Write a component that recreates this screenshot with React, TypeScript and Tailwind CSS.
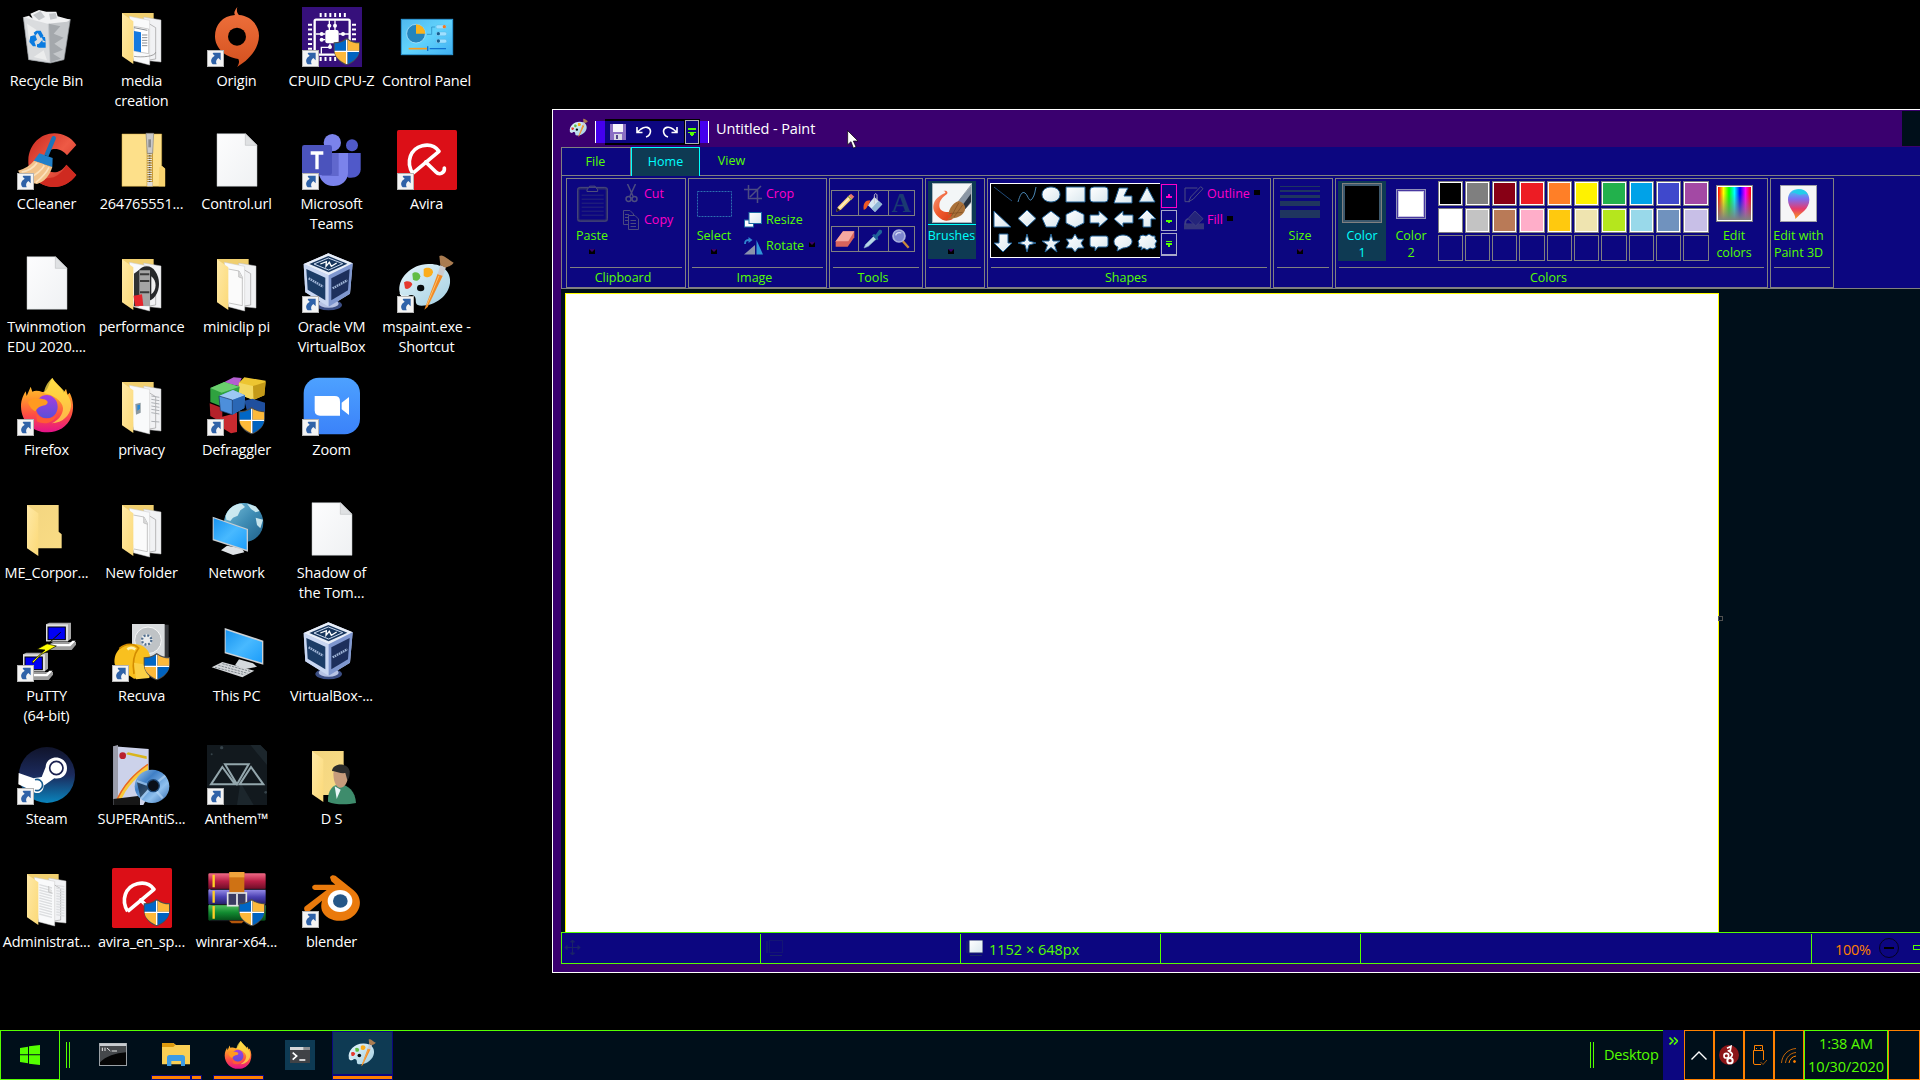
import React from "react";

/* ---------- desktop icons, drawn on a 180 x 180 grid ---------- */

const Shield = () => (
  <g>
    <path d="M134 93 C122 103 108 106 95 106 L95 128 C97 152 114 167 134 175 C154 167 172 152 174 128 L174 106 C160 106 147 103 134 93Z" fill="#4d4d4d" />
    <path d="M132 98 C121 106 110 109 98 109 L98 131 H132Z" fill="#0067c6" />
    <path d="M137 98 C147 106 159 109 171 109 L171 131 H137Z" fill="#fdb93a" />
    <path d="M98 135 H132 V171 C113 162 100 151 98 135Z" fill="#fdb93a" />
    <path d="M137 135 H171 C169 151 156 162 137 171Z" fill="#0063c0" />
    <path d="M134 98V171M98 133H171" stroke="#fff" strokeWidth="4" />
  </g>
);

const Shortcut = () => (
  <g>
    <rect x="1.500" y="130.500" width="48" height="48" fill="#f4f4f4" stroke="#b4b4b4" strokeWidth="3" />
    <path d="M19 137H41V160L34 153C28 158 25 163 29 172H17C9 162 12 153 23 146L17 140Z" fill="#2f62a8" />
  </g>
);

const FolderBack = () => <path d="M30 18H125V98L134 106V148H60L30 140Z" fill="url(#gFolderBack)" />;
const FolderFlap = () => <path d="M30 19L64 43V171L30 148Z" fill="url(#gFolder)" />;

const Papers = ({ children }: { children?: React.ReactNode }) => (
  <g>
    <path d="M30 18H125V60H60L30 140Z" fill="#f0cf70" />
    <path d="M95 30L147 39V165L100 160Z" fill="#f1f2f4" stroke="#bfbfbf" strokeWidth="1.500" />
    <path d="M98 42L131 62V156L104 160" fill="none" stroke="#9a9a9a" strokeWidth="2" />
    <path d="M52 28L113 40V174L64 161Z" fill="#f9fafb" stroke="#c9c9c9" strokeWidth="1.500" />
    {children}
    <FolderFlap />
  </g>
);

const Doc = () => (
  <g>
    <path d="M30 11H116L150 45V169H30Z" fill="url(#gDoc)" stroke="#b9bcbf" strokeWidth="1.500" />
    <path d="M115 11L150 46H115Z" fill="#dfe1e3" stroke="#b0b3b6" strokeWidth="1.500" />
  </g>
);

const VBox = () => (
  <g>
    <ellipse cx="80" cy="156" rx="40" ry="16" fill="#3b4e84" />
    <ellipse cx="80" cy="152" rx="30" ry="12" fill="#b7c3e4" />
    <path d="M79 1L152 31L144 122L80 161L10 118L5 33Z" fill="#b9c8ea" />
    <path d="M79 1L152 31L80 67L5 33Z" fill="#e8eef8" />
    <path d="M79 9L136 32L80 58L22 33Z" fill="#17365d" />
    <path d="M79 15L122 32L80 51L36 33Z" fill="none" stroke="#c9d8ee" strokeWidth="3" />
    <path d="M55 33L73 26L72 40L82 28L88 40L104 30" fill="none" stroke="#fff" strokeWidth="4" />
    <path d="M5 33L80 67V161L10 118Z" fill="#c9d7f2" />
    <path d="M13 48L70 74V142L17 110Z" fill="#1b3c66" />
    <path d="M80 67L152 31L144 122L80 161Z" fill="#7f97cf" />
    <path d="M88 76L143 48L138 112L88 142Z" fill="#1d2f5c" />
    <path d="M20 76L63 101" stroke="#9fb4d6" strokeWidth="7" strokeDasharray="5 2" />
    <path d="M92 106L136 82" stroke="#9fb4d6" strokeWidth="7" strokeDasharray="5 2" />
  </g>
);

const Palette = () => (
  <g>
    <path d="M8 118C0 78 42 33 94 33C138 31 163 58 159 90C155 128 116 158 74 158C54 158 57 148 56 138C55 126 42 122 32 130C20 138 10 132 8 118Z" fill="url(#gPalette)" />
    <path d="M9 122C14 130 24 132 34 128" stroke="#fff" strokeWidth="3" fill="none" />
    <ellipse cx="71" cy="105" rx="11" ry="10" fill="#06090c" />
    <path d="M21 88C28 82 44 84 46 94C42 104 32 112 24 106Z" fill="#e5392f" />
    <path d="M46 62C54 54 68 58 70 70C68 84 58 86 48 80Z" fill="#62bd45" />
    <path d="M80 48C90 40 108 44 108 58C104 74 90 76 80 68Z" fill="#fbad1c" />
    <path d="M82 170L122 62L138 67L92 162Z" fill="#f08a24" />
    <path d="M90 155L126 68" stroke="#ffc06b" strokeWidth="3" />
    <path d="M122 64L130 36L147 43L138 69Z" fill="#c9ccd1" />
    <path d="M127 9C138 2 150 18 170 29C162 40 152 40 146 44L130 36Z" fill="#a97b50" />
  </g>
);

const Firefox = () => (
  <g>
    <path d="M12 92C12 70 20 56 26 46L29 60L41 32L46 47C55 42 65 44 76 48C94 50 96 16 106 6C113 18 128 30 138 44L140 50L147 38L152 56L158 50C170 74 172 100 162 124C150 154 121 170 91 169C48 169 13 138 12 92Z" fill="url(#gFx)" />
    <path d="M106 6C90 20 80 40 82 52C106 56 136 74 138 96C138 118 122 134 104 142C138 140 158 118 162 92C164 72 152 56 142 46C130 30 112 22 106 6Z" fill="#ffe14a" opacity=".75" />
    <ellipse cx="89" cy="92" rx="33" ry="35" fill="url(#gFxIn)" />
    <path d="M33 78C46 64 62 66 80 70C92 72 98 82 84 88C70 90 62 94 56 106C48 104 36 92 33 78Z" fill="#ff9a1f" />
    <path d="M56 106C60 130 100 136 122 114C112 138 86 150 60 136Z" fill="#ff5a36" />
  </g>
);

const Umbrella = () => (
  <g>
    <rect width="180" height="180" rx="5" fill="#dc0f17" />
    <path d="M47 130C26 96 40 56 76 47C98 42 116 50 126 64L47 130" fill="none" stroke="#fff" strokeWidth="11" strokeLinejoin="round" />
    <path d="M86 96L116 125C128 138 144 128 142 114" fill="none" stroke="#fff" strokeWidth="11" strokeLinecap="round" />
  </g>
);

const PuttyPc = () => (
  <g>
    <path d="M87 7L97 2H162V50L152 58H87Z" fill="#a8a8a8" />
    <rect x="87" y="7" width="66" height="51" fill="#e0e0e0" />
    <rect x="93" y="15" width="52" height="38" fill="#0000f4" stroke="#000" strokeWidth="3" />
    <path d="M108 60H177V68L164 84H90V72Z" fill="#9c9c9c" />
    <path d="M86 73H160L176 56H166L156 66H92Z" fill="#fff" />
  </g>
);

const art: Record<string, React.ReactNode> = {
  bin: (
    <g>
      <path d="M19 31L160 37L141 158L100 168L35 158Z" fill="#c5c8cb" />
      <path d="M19 31L92 42L98 168L35 158Z" fill="#dadcde" />
      <path d="M19 31L36 26L50 40L40 20L66 9L88 14L118 14L122 28L160 38L150 44L92 50Z" fill="#f1f2f3" />
      <path d="M48 24L70 12L84 30L66 40ZM96 20L116 18L120 34L100 38Z" fill="#c4c7ca" />
      <path d="M96 50L130 58L110 80L140 92L112 110L138 128L108 140L132 155L100 166Z" fill="#a4a8ac" />
      <path d="M30 50L60 70L36 100ZM50 150L80 130L90 160Z" fill="#eceded" />
      <path d="M19 31L35 158L100 168L141 158L160 37" fill="none" stroke="#8c9196" strokeWidth="2" />
      <path d="M50 77L58 71H71L80 88L71 93L62 78L55 86ZM40 88L55 84L60 98L52 104L57 118H48L37 105ZM66 110L76 99L77 106H86V122H66L60 120V112ZM74 90L84 90L86 104L78 100Z" fill="#0a7be0" />
    </g>
  ),
  media: (
    <Papers>
      <path d="M66 58L110 66V140L66 132Z" fill="#fff" stroke="#999" strokeWidth="1.500" />
      <path d="M66 72L87 76V136L66 131Z" fill="#1479e0" />
      <path d="M66 62L106 70M90 84H106M90 92H106M90 100H106M90 108H106M90 116H106" stroke="#8b8f94" strokeWidth="3" />
      <path d="M66 148C90 152 130 148 131 136" fill="none" stroke="#777" strokeWidth="2" />
    </Papers>
  ),
  origin: (
    <g>
      <path d="M91 0C82 12 80 18 84 24C46 26 24 54 24 88C24 120 50 150 94 156C98 164 96 172 90 180C126 160 156 124 156 86C156 54 130 26 96 24C90 18 88 10 91 0Z" fill="url(#gOrigin)" />
      <circle cx="90" cy="89" r="27" fill="#000" />
    </g>
  ),
  cpuz: (
    <g>
      <rect width="180" height="180" fill="#36107b" />
      <rect x="38" y="38" width="105" height="105" rx="4" fill="none" stroke="#fff" strokeWidth="7" />
      <path d="M53 24H132M53 156H132" stroke="#fff" strokeWidth="12" strokeDasharray="6 8.500" />
      <path d="M24 50V132M156 50V132" stroke="#fff" strokeWidth="12" strokeDasharray="6 8.500" />
      <rect x="70" y="69" width="40" height="40" rx="6" fill="#fff" />
      <path d="M82 70V40M99 70V40M70 81H42M70 98H60M110 81H142M84 110V121H58V140" stroke="#fff" strokeWidth="4" fill="none" />
      {[[82, 56], [99, 56], [59, 81], [59, 98], [123, 81], [84, 120]].map(([x, y]) => (
        <circle key={`${x}-${y}`} cx={x} cy={y} r="6" fill="#fff" />
      ))}
    </g>
  ),
  panel: (
    <g>
      <rect x="13" y="37" width="154" height="106" fill="url(#gPanel)" stroke="#2f9bd8" strokeWidth="3" />
      <circle cx="57" cy="80" r="28" fill="#2585bd" stroke="#bfeaff" strokeWidth="2" />
      <path d="M57 80V52A28 28 0 0 1 85 80Z" fill="#fbb31c" />
      <path d="M90 82H104V60H114" stroke="#2384bd" strokeWidth="2" fill="none" />
      <rect x="117" y="54" width="32" height="11" rx="5" fill="#9fe0ff" stroke="#4ba9db" />
      <rect x="117" y="75" width="32" height="11" rx="5" fill="#9fe0ff" stroke="#4ba9db" />
      <rect x="117" y="97" width="32" height="11" rx="5" fill="#9fe0ff" stroke="#4ba9db" />
      <circle cx="142" cy="59" r="5" fill="#f47b20" />
      <circle cx="124" cy="80" r="5" fill="#175d8f" />
      <circle cx="124" cy="102" r="5" fill="#175d8f" />
      <path d="M35 125H90" stroke="#fb9d1c" strokeWidth="5" />
      <path d="M98 125H147M92 118V132" stroke="#0f72cf" strokeWidth="4" />
    </g>
  ),
  ccleaner: (
    <g>
      <path d="M178 45L150 76C140 62 122 54 106 58C82 64 72 92 84 112C98 134 130 132 148 104L178 135C158 162 130 174 100 170C60 164 32 134 34 90C36 44 70 10 112 10C138 10 162 22 178 45Z" fill="url(#gRed)" />
      <path d="M148 104L178 135C158 162 130 174 100 170C84 168 70 162 58 150L110 142C126 134 140 122 148 104Z" fill="#cf2a20" />
      <path d="M104 22C108 14 120 18 116 28L94 80L82 74Z" fill="#1b74bb" />
      <path d="M67 70L107 84L106 112L50 92Z" fill="#2180c9" />
      <path d="M3 122C24 116 40 106 51 92L106 111C96 140 82 156 60 162C36 156 14 140 3 122Z" fill="#f2c38b" />
      <path d="M14 126C36 122 52 110 60 98M34 146C60 132 76 118 82 106M56 158C78 140 90 124 96 112" stroke="#fbe2bd" strokeWidth="5" fill="none" />
    </g>
  ),
  zip: (
    <g>
      <path d="M30 12H149V108L159 116V169H30Z" fill="#fde08a" stroke="#d7ae45" strokeWidth="1.500" />
      <path d="M142 112L150 108L159 116V169H140Z" fill="#f8d36f" />
      <rect x="104" y="12" width="19" height="157" fill="#c79c3c" />
      <path d="M113 66V169" stroke="#e8e8e8" strokeWidth="14" strokeDasharray="3 4" />
      <path d="M113 69V169" stroke="#54504a" strokeWidth="5" strokeDasharray="3 4" />
      <path d="M102 10H125L122 70H106Z" fill="#c9c9c9" stroke="#858585" strokeWidth="2" />
      <path d="M109 28H117V52H109Z" fill="#8b8b8b" />
      <rect x="106" y="156" width="16" height="13" fill="#ddd" />
    </g>
  ),
  doc: <Doc />,
  teams: (
    <g>
      <circle cx="91" cy="38" r="26" fill="#7b83eb" />
      <circle cx="150" cy="46" r="18" fill="#5059c9" />
      <path d="M110 69H176V118C176 136 160 146 140 143L118 130Z" fill="#5059c9" />
      <path d="M50 69H138V128C138 152 118 168 94 168C68 168 54 150 50 130Z" fill="#7b83eb" />
      <path d="M90 69H110V138H60L54 128H90Z" fill="#4a50b5" opacity=".55" />
      <rect y="45" width="90" height="90" rx="7" fill="#4b53bc" />
      <path d="M26 69H64M45 68V118" stroke="#fff" strokeWidth="10" />
    </g>
  ),
  avira: <Umbrella />,
  performance: (
    <Papers>
      <ellipse cx="104" cy="92" rx="37" ry="52" fill="#26282a" />
      <path d="M118 70V124C134 112 136 84 118 70Z" fill="#f0f0f0" />
      <path d="M82 52H114V160L66 158V62Z" fill="#a5a5a5" />
      <path d="M66 62L82 50V160H66Z" fill="#303234" />
      <path d="M84 64H112M84 84H112M84 118H112" stroke="#3b3b3b" strokeWidth="6" />
      <path d="M64 128L90 124L94 158L70 160Z" fill="#e5252c" />
    </Papers>
  ),
  papers: (
    <Papers>
      <path d="M64 48L96 54L106 72V158L66 150" fill="#fbfbfb" stroke="#a9a9a9" strokeWidth="2" />
      <path d="M95 54V72L107 76" fill="#d9d9d9" stroke="#b7b7b7" strokeWidth="2" />
    </Papers>
  ),
  admin: (
    <Papers>
      {[58, 66, 74, 82, 90, 98, 106, 114, 122, 130, 138, 146].map((y) => (
        <path key={y} d={`M67 ${y - 8}L105 ${y + 2}M118 ${y - 6}L142 ${y - 2}`} stroke="#dcdee0" strokeWidth="4" />
      ))}
      <path d="M95 54V72L107 76" fill="#e3e3e3" stroke="#b7b7b7" strokeWidth="2" />
    </Papers>
  ),
  privacy: (
    <Papers>
      <path d="M70 84L86 80V110L72 116Z" fill="#8d989f" />
      <path d="M76 88L84 86V98L76 104Z" fill="#2688d8" />
      <path d="M118 60L142 64M118 70L142 74M118 80L142 84M118 90L142 94M118 100L142 104M118 110L142 114M118 136L142 138" stroke="#aeb1b5" strokeWidth="3" />
    </Papers>
  ),
  folder: (
    <g>
      <FolderBack />
      <FolderFlap />
    </g>
  ),
  vbox: <VBox />,
  palette: <Palette />,
  firefox: <Firefox />,
  defrag: (
    <g>
      <path d="M48 20L80 4L104 6L94 30Z" fill="#b45fd0" />
      <path d="M96 20L112 4L176 14L172 58L140 72L92 54Z" fill="#edc531" />
      <path d="M96 20L138 30L140 72L92 54Z" fill="#f3d860" />
      <path d="M138 30L176 18L172 58L140 72Z" fill="#c49a18" />
      <path d="M10 36L52 18L98 32L94 60L50 94L10 78Z" fill="#2fa23f" />
      <path d="M10 36L52 18L98 32L44 50Z" fill="#6bcf6e" />
      <path d="M8 82L46 96V140L10 120Z" fill="#b5222a" />
      <path d="M40 124L90 110V168L72 172L36 150Z" fill="#c92a30" />
      <path d="M112 74L136 68L174 80V110L120 104Z" fill="#1f4f9e" />
      <path d="M36 60L78 42L114 58L112 96L76 116L40 104Z" fill="#4d8fdb" />
      <path d="M36 60L78 42L114 58L76 72Z" fill="#9cc8f3" />
      <path d="M76 72L114 58L112 96L76 116Z" fill="#2a67b5" />
      <path d="M36 60L76 72V116L40 104Z" fill="none" stroke="#16325d" strokeWidth="2" />
    </g>
  ),
  zoom: (
    <g>
      <rect x="5" y="5" width="169" height="170" rx="46" fill="url(#gZoom)" />
      <path d="M38 60H98Q114 60 114 76V119H54Q38 119 38 103Z" fill="#fff" />
      <path d="M119 80L141 63V117L119 100Z" fill="#fff" />
    </g>
  ),
  network: (
    <g>
      <circle cx="110" cy="71" r="59" fill="url(#gGlobe)" />
      <path d="M56 50C66 24 86 14 104 14L114 24L100 34L92 50L78 56L70 66L58 62ZM120 14L146 22L158 36L146 40L132 30ZM146 56L168 62L160 88L150 78Z" fill="#d6f0f4" opacity=".9" />
      <path d="M60 140L104 148L112 160L78 168L42 154Z" fill="#dfe3e6" />
      <path d="M17 53L123 90V158L17 124Z" fill="#c8cdd1" />
      <path d="M20 58L119 92V152L20 120Z" fill="url(#gScreen)" />
    </g>
  ),
  putty: (
    <g>
      <PuttyPc />
      <g transform="translate(-69 90)">
        <PuttyPc />
      </g>
      <path d="M131 31L92 66L118 72L72 98L48 124L46 118L84 84L60 82L100 60Z" fill="#ff0" stroke="#000" strokeWidth="2" />
    </g>
  ),
  recuva: (
    <g>
      <path d="M60 8L170 8L170 110L60 90Z" fill="#35373a" />
      <path d="M60 6H158V104H60Z" fill="#d9dcde" />
      <circle cx="108" cy="55" r="40" fill="#bfc3c6" stroke="#f7f7f7" strokeWidth="3" />
      <circle cx="104" cy="54" r="18" fill="#e9ebec" />
      <circle cx="104" cy="54" r="14" fill="none" stroke="#526f8f" strokeWidth="7" strokeDasharray="6 5" />
      <path d="M8 126C4 90 28 66 62 66C96 66 116 84 116 118L112 166L66 170C40 152 20 148 8 126Z" fill="#f9c01f" />
      <path d="M22 80C42 62 66 64 80 78C66 96 60 120 66 156" fill="none" stroke="#d38c00" strokeWidth="5" />
      <path d="M46 82C54 76 64 78 70 82" stroke="#fff2b0" strokeWidth="8" fill="none" />
      <path d="M66 122L112 130V168L72 172Z" fill="#fbd045" />
    </g>
  ),
  thispc: (
    <g>
      <path d="M96 112L138 124L150 134L112 142L84 130Z" fill="#d4d9dd" />
      <path d="M53 18L169 56V128L53 94Z" fill="#ccd1d5" />
      <path d="M56 24L165 60V122L56 90Z" fill="url(#gScreen)" />
      <path d="M14 136L46 120L142 146L106 166Z" fill="#d3d6d9" />
      <path d="M24 136L112 158M34 130L122 154M46 125L132 149" stroke="#7e868c" strokeWidth="3" strokeDasharray="7 3" />
    </g>
  ),
  steam: (
    <g>
      <circle cx="90" cy="90" r="84" fill="url(#gSteam)" />
      <path d="M5 84L50 100C62 96 68 98 74 96L86 66C88 26 150 28 150 70C150 94 130 104 112 100L80 122C80 144 58 150 46 138L4 118Z" fill="#fff" />
      <circle cx="118" cy="69" r="20" fill="none" stroke="#1b2150" strokeWidth="5" />
      <path d="M54 104A17 17 0 1 1 54 136" fill="none" stroke="#155a8d" strokeWidth="5" />
    </g>
  ),
  superanti: (
    <g>
      <path d="M4 4L110 12V150L94 180H4Z" fill="#ccd2ea" />
      <path d="M4 4L18 0V160L4 180Z" fill="#9b9dab" />
      <path d="M42 28L104 42V34L48 22Z" fill="#d9b51d" />
      <circle cx="32" cy="32" r="10" fill="#b9202d" />
      <path d="M108 56C76 76 36 110 6 178H22C44 120 80 92 108 76Z" fill="#f7c93a" />
      <path d="M108 58C72 84 34 116 10 176" stroke="#e8622a" strokeWidth="4" fill="none" />
      <path d="M4 162L84 152V180H4Z" fill="#161616" />
      <ellipse cx="120" cy="124" rx="52" ry="50" fill="url(#gDisc)" />
      <path d="M74 108L120 124L86 162M120 124L160 92M120 124L152 160" stroke="#c7e2fb" strokeWidth="7" opacity=".5" />
      <circle cx="124" cy="122" r="18" fill="#0a0f18" stroke="#1e4775" strokeWidth="4" />
    </g>
  ),
  anthem: (
    <g>
      <path d="M0 0H160L180 20V180H0Z" fill="#12191e" />
      <path d="M100 112L140 180H90ZM130 0H160L180 20V60Z" fill="#1c262c" />
      <path d="M46 66L12 118H84ZM132 66L98 118H169ZM54 58H125L90 118Z" fill="none" stroke="#93a6ac" strokeWidth="6" />
      <circle cx="44" cy="8" r="5" fill="#36434a" />
      <circle cx="176" cy="142" r="4" fill="#36434a" />
      <circle cx="14" cy="28" r="3" fill="#36434a" />
    </g>
  ),
  user: (
    <g>
      <path d="M30 18H125V150H60L30 140Z" fill="url(#gFolderBack)" />
      <FolderFlap />
      <path d="M78 170C76 134 94 120 112 118C140 120 160 140 162 174C134 180 100 180 78 170Z" fill="#3e8c6c" />
      <path d="M98 124L116 134L104 162Z" fill="#eaf5f8" />
      <path d="M94 84C98 70 132 70 138 90C138 112 128 130 112 128C100 126 94 104 94 84Z" fill="#c79c7c" />
      <path d="M90 78C92 54 136 50 143 78C144 94 140 104 136 106L130 84C116 86 104 80 90 78Z" fill="#2c2c2c" />
    </g>
  ),
  winrar: (
    <g>
      <rect x="4" y="16" width="172" height="48" rx="4" fill="url(#gBookR)" />
      <rect x="4" y="64" width="172" height="46" rx="4" fill="url(#gBookB)" />
      <rect x="4" y="110" width="172" height="48" rx="4" fill="url(#gBookG)" />
      <path d="M20 20V58M20 68V104M20 114V152" stroke="#ffcf26" strokeWidth="7" />
      <path d="M10 64H176M10 110H176M10 158H120" stroke="#15151d" strokeWidth="3" />
      <rect x="67" y="12" width="45" height="64" fill="#cf7214" />
      <path d="M67 12H112V28H67Z" fill="#f0a43c" />
      <rect x="62" y="75" width="56" height="38" fill="#3b3b62" stroke="#e3e3e3" strokeWidth="5" />
      <path d="M90 78V112" stroke="#eee" strokeWidth="5" />
      <path d="M66 158H112L104 166H74Z" fill="#b4560a" />
    </g>
  ),
  blender: (
    <g>
      <path d="M84 28C90 18 100 22 106 28L154 66C186 92 176 132 146 150C114 168 72 156 60 128C56 116 58 106 60 98L24 128C14 136 2 128 8 116L74 66H38C28 64 28 52 38 50H100L88 40Z" fill="#ea7a0c" />
      <ellipse cx="114" cy="99" rx="37" ry="33" fill="#fff" />
      <ellipse cx="115" cy="99" rx="22" ry="20" fill="#265787" />
    </g>
  ),
};

type Item = { a: string; t: string[]; s?: boolean; u?: boolean };

const columns: Item[][] = [
  [
    { a: "bin", t: ["Recycle Bin"] },
    { a: "ccleaner", t: ["CCleaner"], s: true },
    { a: "doc", t: ["Twinmotion", "EDU 2020...."] },
    { a: "firefox", t: ["Firefox"], s: true },
    { a: "folder", t: ["ME_Corpor..."] },
    { a: "putty", t: ["PuTTY", "(64-bit)"], s: true },
    { a: "steam", t: ["Steam"], s: true },
    { a: "admin", t: ["Administrat..."] },
  ],
  [
    { a: "media", t: ["media", "creation"] },
    { a: "zip", t: ["264765551..."] },
    { a: "performance", t: ["performance"] },
    { a: "privacy", t: ["privacy"] },
    { a: "papers", t: ["New folder"] },
    { a: "recuva", t: ["Recuva"], s: true, u: true },
    { a: "superanti", t: ["SUPERAntiS..."] },
    { a: "avira", t: ["avira_en_sp..."], u: true },
  ],
  [
    { a: "origin", t: ["Origin"], s: true },
    { a: "doc", t: ["Control.url"] },
    { a: "papers", t: ["miniclip pi"] },
    { a: "defrag", t: ["Defraggler"], s: true, u: true },
    { a: "network", t: ["Network"] },
    { a: "thispc", t: ["This PC"] },
    { a: "anthem", t: ["Anthem™"], s: true },
    { a: "winrar", t: ["winrar-x64..."], u: true },
  ],
  [
    { a: "cpuz", t: ["CPUID CPU-Z"], s: true, u: true },
    { a: "teams", t: ["Microsoft", "Teams"], s: true },
    { a: "vbox", t: ["Oracle VM", "VirtualBox"], s: true },
    { a: "zoom", t: ["Zoom"], s: true },
    { a: "doc", t: ["Shadow of", "the Tom..."] },
    { a: "vbox", t: ["VirtualBox-..."] },
    { a: "user", t: ["D S"] },
    { a: "blender", t: ["blender"], s: true },
  ],
  [
    { a: "panel", t: ["Control Panel"] },
    { a: "avira", t: ["Avira"], s: true },
    { a: "palette", t: ["mspaint.exe -", "Shortcut"], s: true },
  ],
];

const Grad = ({ id, stops, v }: { id: string; stops: string[]; v?: boolean }) => (
  <linearGradient id={id} x1="0" y1="0" x2={v ? "0" : "1"} y2="1">
    {stops.map((c, i) => (
      <stop key={i} offset={i / (stops.length - 1)} stopColor={c} />
    ))}
  </linearGradient>
);

const Gradients = () => (
  <svg width="0" height="0" className="absolute">
    <defs>
      <Grad id="gFolder" stops={["#ffe9a6", "#fbd978"]} />
      <Grad id="gFolderBack" stops={["#f3d580", "#f9dc85"]} />
      <Grad id="gDoc" stops={["#fdfdfe", "#eff1f3"]} />
      <Grad id="gPalette" stops={["#e6f5fb", "#a3cfe2"]} />
      <Grad id="gFx" v stops={["#ffd43b", "#ff9f2a", "#ff4f42", "#e4118a"]} />
      <Grad id="gFxIn" v stops={["#a53de0", "#5a4fd8"]} />
      <Grad id="gOrigin" v stops={["#f0723e", "#d4511f"]} />
      <Grad id="gPanel" stops={["#4fb8ee", "#62d3fc", "#3fb0f2"]} />
      <Grad id="gRed" stops={["#c8281f", "#ee5a45", "#c8281f"]} />
      <Grad id="gZoom" v stops={["#4da1ff", "#3b82f9"]} />
      <Grad id="gGlobe" stops={["#7cc2dd", "#3f8db5", "#1e5f88"]} />
      <Grad id="gScreen" stops={["#1793f0", "#48b9ff", "#1c9dfa"]} />
      <Grad id="gSteam" v stops={["#10142b", "#1b2a5c", "#0a85bd"]} />
      <Grad id="gDisc" stops={["#a9cdf0", "#3f7fc6", "#8fc0ee", "#2e66ab"]} />
      <Grad id="gBookR" v stops={["#f06a86", "#b61e45", "#6b0d26"]} />
      <Grad id="gBookB" v stops={["#9a90ea", "#4a40b2", "#231d66"]} />
      <Grad id="gBookG" v stops={["#53c260", "#118a30", "#064a18"]} />
      <Grad id="gShape" stops={["#ffffff", "#d9e7ee"]} />
      <Grad id="gDrop" v stops={["#35d6f2", "#7d6cf0", "#e83a6a", "#f6a21c"]} />
      <Grad id="gSwirl" stops={["#f7a184", "#f0592b", "#d8401a"]} />
    </defs>
  </svg>
);

const DesktopItem = ({ item }: { item: Item }) => (
  <div className="flex h-[123px] w-[95px] flex-col items-center pt-[7px]">
    <svg viewBox="0 0 180 180" className="mr-px h-[60px] w-[60px] shrink-0">
      {art[item.a]}
      {item.u && <Shield />}
      {item.s && <Shortcut />}
    </svg>
    <div className="mr-[2px] mt-[4px] flex flex-col items-center text-[14.5px] leading-[20px] tracking-[-0.2px] text-white">
      {item.t.map((l) => (
        <span key={l} className="whitespace-nowrap">
          {l}
        </span>
      ))}
    </div>
  </div>
);

/* ---------- ribbon ---------- */

const Group = ({ w, label, children }: { w: string; label?: string; children: React.ReactNode }) => (
  <div className={`flex h-[110px] shrink-0 flex-col border border-[#808080] ${w}`}>
    <div className="flex h-[88px] items-start">{children}</div>
    <div className="mx-[3px] h-px shrink-0 bg-[#808080]" />
    <div className="flex h-[19px] items-center justify-center pr-[6px]">{label}</div>
  </div>
);

const Down = () => (
  <svg viewBox="0 0 6 5" className="h-[5px] w-[6px]">
    <rect width="6" height="5" fill="#000" />
    <path d="M0 0H6L3 3Z" fill="#3a006f" />
  </svg>
);

const BigButton = ({ icon, label, arrow, className }: { icon: React.ReactNode; label: string[]; arrow?: boolean; className: string }) => (
  <div className={`flex shrink-0 flex-col items-center ${className}`}>
    <div className="flex h-[47px] w-full items-center justify-center">{icon}</div>
    {label.map((l) => (
      <span key={l} className="h-[17px] whitespace-nowrap leading-[17px]">
        {l}
      </span>
    ))}
    {arrow && (
      <div className="mt-[5px]">
        <Down />
      </div>
    )}
  </div>
);

const Row = ({ icon, label, off, arrow }: { icon: React.ReactNode; label: string; off?: boolean; arrow?: React.ReactNode }) => (
  <div className={`flex h-[26px] items-center ${off ? "text-[#ff00c8]" : ""}`}>
    <div className="flex w-[20px] justify-center">{icon}</div>
    <span className="mb-[2px] ml-[3px] whitespace-nowrap">{label}</span>
    {arrow}
  </div>
);

const BlackBox = () => <div className="mb-[3px] ml-[4px] h-[5px] w-[6px] bg-black" />;

const PasteIcon = () => (
  <svg viewBox="0 0 93 110" className="h-[37px] w-[31px]">
    <rect x="3" y="9" width="87" height="98" rx="6" fill="none" stroke="#2c2c6c" strokeWidth="8" />
    <path d="M30 14L38 3H54L62 14V19H30Z" fill="#0c0680" stroke="#50507a" strokeWidth="3" />
    <path d="M14 30H80M14 42H80M14 54H80M14 66H80M14 78H80M14 90H80" stroke="#282878" strokeWidth="3" />
    <rect x="1.500" y="7" width="90" height="101" rx="8" fill="none" stroke="#44447a" strokeWidth="3" />
  </svg>
);
const CutIcon = () => (
  <svg viewBox="0 0 12 20" className="h-[20px] w-[13px]" fill="none" stroke="#4c4c80" strokeWidth="1.500">
    <path d="M2 0L7.500 12M10 0L4.500 12" />
    <circle cx="3" cy="15" r="2.500" />
    <circle cx="9" cy="15" r="2.500" />
  </svg>
);
const CopyIcon = () => (
  <svg viewBox="0 0 16 20" className="h-[20px] w-[16px]" fill="#0c0680" stroke="#4a4a80">
    <path d="M.5.5H7L10.500 4V14.500H.5ZM2 4.500H6M2 7.500H8M2 10.500H8" />
    <path d="M5.500 5.500H12L15.500 9V19.500H5.500ZM7.500 10.500H13M7.500 13.500H13M7.500 16.500H13" />
  </svg>
);
const SelectIcon = () => (
  <svg viewBox="0 0 35 26" className="h-[26px] w-[35px]">
    <rect x=".5" y=".5" width="34" height="25" fill="none" stroke="#2d6fb0" strokeDasharray="2 1" />
  </svg>
);
const CropIcon = () => (
  <svg viewBox="0 0 18 18" className="h-[18px] w-[18px]" fill="none" stroke="#4c4c82" strokeWidth="1.500">
    <path d="M4.500 0V13.500H18M0 4.500H13.500V18M6 12L17 1" />
  </svg>
);
const ResizeIcon = () => (
  <svg viewBox="0 0 18 16" className="h-[16px] w-[18px]">
    <rect x=".5" y="8" width="9" height="7" fill="#fff" stroke="#1d6aa5" />
    <rect x="5" y=".5" width="12.500" height="11" fill="url(#gShape)" stroke="#1d6aa5" />
  </svg>
);
const RotateIcon = () => (
  <svg viewBox="0 0 19 18" className="h-[18px] w-[19px]">
    <path d="M0 17.500H11V8Z" fill="#8a94ac" />
    <path d="M12.500 17.500V3L19 17.500Z" fill="#2f96d8" />
    <path d="M1 7C1 3 3 3 5 3" fill="none" stroke="#2f86d0" strokeWidth="1.800" />
    <path d="M4.500 0L8.500 3L4.500 6Z" fill="#2f86d0" />
  </svg>
);
const PencilIcon = () => (
  <svg viewBox="0 0 60 60" className="h-[20px] w-[20px]">
    <path d="M3 57L8 42L44 5L54 14L18 50Z" fill="#f6cf7c" />
    <path d="M12 47L48 9" stroke="#fff0c4" strokeWidth="5" />
    <path d="M3 57L7 44L16 52Z" fill="#2a211b" />
    <path d="M42 8L48 2L58 11L51 18Z" fill="#e57a6c" />
    <path d="M39 10L50 20" stroke="#8ca43c" strokeWidth="4" />
  </svg>
);
const BucketIcon = ({ dim }: { dim?: boolean }) => (
  <svg viewBox="0 0 60 60" className="h-[20px] w-[20px]">
    {dim ? (
      <g>
        <rect y="40" width="60" height="18" fill="#35357c" />
        <path d="M33 3L57 26L35 48L12 26Z" fill="#24247a" stroke="#3f3f84" strokeWidth="3" />
        <path d="M12 26C4 30 3 38 5 44" stroke="#3f3f84" strokeWidth="5" fill="none" />
      </g>
    ) : (
      <g>
        <path d="M34 12L58 34L36 57L14 36Z" fill="#d5e6f3" />
        <path d="M36 57L58 34L46 24L26 46Z" fill="#8fb6d6" />
        <path d="M22 22C6 22 0 32 2 50C12 50 12 38 18 34Z" fill="#ee5a24" />
        <path d="M34 32V8C34 0 43 0 42 10V24" fill="none" stroke="#c9c9cf" strokeWidth="3" />
      </g>
    )}
  </svg>
);
const EraserIcon = () => (
  <svg viewBox="0 0 60 54" className="h-[18px] w-[20px]">
    <path d="M2 34L24 4L58 4V22L38 50H2Z" fill="#d9645c" />
    <path d="M2 34L24 4L58 4L40 34Z" fill="#f6a9a0" />
  </svg>
);
const PickerIcon = () => (
  <svg viewBox="0 0 60 60" className="h-[20px] w-[20px]">
    <path d="M3 57L8 46L32 22L40 30L16 52Z" fill="#b8d6e8" stroke="#7fa6c4" strokeWidth="2" />
    <path d="M27 19L33 15L38 17L48 3C55 0 60 6 56 13L44 24L46 31L42 34Z" fill="#1f6399" />
  </svg>
);
const LensIcon = () => (
  <svg viewBox="0 0 54 60" className="h-[20px] w-[18px]">
    <path d="M32 36L50 56" stroke="#c98b3c" strokeWidth="7" />
    <circle cx="21" cy="21" r="18" fill="#7d86cf" stroke="#a9b1dd" strokeWidth="5" />
    <path d="M11 19C13 12 20 9 28 12" stroke="#d4daf6" strokeWidth="4" fill="none" />
  </svg>
);
const BrushIcon = () => (
  <svg viewBox="0 0 120 120" className="h-[40px] w-[40px]">
    <rect x="1.500" y="1.500" width="117" height="117" fill="#f3f6f7" stroke="#a9b4bc" strokeWidth="3" />
    <path d="M117 8L78 56L100 78L117 60Z" fill="#8a96a4" />
    <path d="M117 32L92 66L100 78L117 56Z" fill="#27323f" />
    <path d="M117 6L80 54" stroke="#6f7b88" strokeWidth="2" />
    <path d="M34 24C44 20 50 28 44 34C30 44 22 54 22 68C22 84 40 90 58 86L62 108C50 114 36 116 24 106C6 92 0 76 6 60C12 44 30 34 40 30C40 26 38 25 34 24Z" fill="url(#gSwirl)" />
    <path d="M48 110C46 84 60 60 80 54C96 58 106 74 96 88C86 104 66 106 48 110Z" fill="#a9713a" />
    <path d="M30 110C46 112 60 106 60 88C50 94 44 102 30 110Z" fill="#e04a20" />
    <path d="M58 100L80 60M66 102L92 66M52 92L92 88" stroke="#7d4c20" strokeWidth="2" />
  </svg>
);

const shapePaths = [
  "M1 2L19 16",
  "M1 17C3 10 5 6 8 8S12 18 15 14S18 6 19 2",
  "M10 2C15 2 19 5 19 9.500S15 17 10 17S1 14 1 9.500S5 2 10 2Z",
  "M1 2H20V17H1Z",
  "M5 2H16Q19 2 19 5V14Q19 17 16 17H4Q1 17 1 14V5Q1 2 5 2Z",
  "M6 3H15L11 11H19V18H1Z",
  "M10 2L18 17H2Z",
  "M1 2L18 18H1Z",
  "M10 1L19 9.500L10 18L1 9.500Z",
  "M10 2L19 9L15 18H5L1 9Z",
  "M10 1L19 5.500V14L10 18.500L1 14V5.500Z",
  "M1 6H10V2L19 10L10 18V14H1Z",
  "M20 6H10V2L1 10L10 18V14H20Z",
  "M10 1L19 10H14V18H6V10H1Z",
  "M6 1H15V10H19L10 19L1 10H6Z",
  "M10 1L12 8L19 10L12 12L10 19L8 12L1 10L8 8Z",
  "M10 1L12 8H19L13.500 12L16 19L10 14.500L4 19L6.500 12L1 8H8Z",
  "M10 1L13 6H19L16 10L19 15H13L10 19L7 15H1L4 10L1 6H7Z",
  "M3 3H17Q19 3 19 5V12Q19 14 17 14H9L6 18V14H3Q1 14 1 12V5Q1 3 3 3Z",
  "M10 2C15 2 19 5 19 8.500S15 15 10 15L4 18L5 14C2 13 1 11 1 8.500C1 5 5 2 10 2Z",
  "M3 3L6 2L9 3L12 1L15 3L18 3L18 6L20 8L18 11L19 14L16 16L13 15L10 17L7 15L4 17L5 14L1 14L2 11L1 8L3 6Z",
];

const Gallery = () => (
  <div className="ml-[2px] mt-[4px] h-[75px] w-[170px] border-y border-l border-white bg-black pl-[2px]">
    {[0, 1, 2].map((r) => (
      <div key={r} className="flex h-[24px] items-center gap-[4px] pb-[2px]">
        {shapePaths.slice(r * 7, r * 7 + 7).map((d, i) => (
          <svg key={i} viewBox="0 0 20 20" className="h-[20px] w-[20px] shrink-0 overflow-visible">
            <path d={d} fill={r === 0 && i < 2 ? "none" : "url(#gShape)"} stroke={r === 0 && i < 2 ? (i ? "#4a86b4" : "#1f4a78") : "#1f5f94"} />
          </svg>
        ))}
      </div>
    ))}
  </div>
);

const Spin = ({ d, className }: { d: string; className: string }) => (
  <div className={`flex w-[16px] items-center justify-center border ${className}`}>
    <svg viewBox="0 0 6 6" className="h-[6px] w-[6px]" fill="currentColor" shapeRendering="crispEdges">
      <path d={d} />
    </svg>
  </div>
);

const ToolRow = ({ icons }: { icons: React.ReactNode[] }) => (
  <div className="flex h-[26px] w-[84px] divide-x divide-[#808080] border border-[#808080]">
    <div className="flex w-[28px] items-center justify-center">{icons[0]}</div>
    <div className="flex w-[30px] items-center justify-center">{icons[1]}</div>
    <div className="flex w-[26px] items-center justify-center">{icons[2]}</div>
  </div>
);

const swatches = [
  "bg-black", "bg-[#7f7f7f]", "bg-[#880015]", "bg-[#ed1c24]", "bg-[#ff7f27]", "bg-[#fff200]", "bg-[#22b14c]", "bg-[#00a2e8]", "bg-[#3f48cc]", "bg-[#a349a4]",
  "bg-white", "bg-[#c3c3c3]", "bg-[#b97a57]", "bg-[#ffaec9]", "bg-[#ffc90e]", "bg-[#efe4b0]", "bg-[#b5e61d]", "bg-[#99d9ea]", "bg-[#7092be]", "bg-[#c8bfe7]",
];

const Swatches = () => (
  <div className="ml-[4px] mt-[2px] grid shrink-0 grid-cols-[25px_25px_25px_26px_25px_25px_26px_25px_25px_26px] grid-rows-[25px_25px_26px] gap-[2px]">
    {swatches.map((c) => (
      <div key={c} className="border border-[#808080] bg-white p-px">
        <div className={`h-full w-full ${c}`} />
      </div>
    ))}
    {Array.from({ length: 10 }, (_, i) => (
      <div key={i} className="border border-[#808080]" />
    ))}
  </div>
);

const Ribbon = () => (
  <div className="flex h-[113px] gap-[2px] border-b border-l border-[#808080] pl-[4px] pt-[2px] text-[12.5px] leading-[17px] text-[#55ff00]">
    <Group w="w-[120px]" label="Clipboard">
      <BigButton className="w-[50px] pt-[1px]" icon={<PasteIcon />} label={["Paste"]} arrow />
      <div className="ml-[4px] mt-[2px]">
        <Row icon={<CutIcon />} label="Cut" off />
        <Row icon={<CopyIcon />} label="Copy" off />
      </div>
    </Group>
    <Group w="w-[139px]" label="Image">
      <BigButton className="w-[50px] pt-[1px]" icon={<SelectIcon />} label={["Select"]} arrow />
      <div className="ml-[4px] mt-[2px]">
        <Row icon={<CropIcon />} label="Crop" off />
        <Row icon={<ResizeIcon />} label="Resize" />
        <Row icon={<RotateIcon />} label="Rotate" arrow={<div className="mb-[3px] ml-[5px]"><Down /></div>} />
      </div>
    </Group>
    <Group w="w-[94px]" label="Tools">
      <div className="ml-[1px] mt-[11px] flex flex-col gap-[10px]">
        <ToolRow
          icons={[
            <PencilIcon />,
            <BucketIcon />,
            <span className="font-['Liberation_Serif'] text-[27px] font-bold leading-none text-[#1b3a72]">A</span>,
          ]}
        />
        <ToolRow icons={[<EraserIcon />, <PickerIcon />, <LensIcon />]} />
      </div>
    </Group>
    <Group w="w-[60px]">
      <div className="ml-[2px] mt-[2px] flex h-[78px] w-[48px] flex-col items-center bg-[#0e3a53] pt-[2px] text-[#00ffff]">
        <BrushIcon />
        <div className="mt-px h-px w-full shrink-0 bg-[#00ffff]" />
        <span className="mr-px mt-[2px] leading-[17px]">Brushes</span>
        <div className="mr-[2px] mt-[5px]">
          <Down />
        </div>
      </div>
    </Group>
    <Group w="w-[284px]" label="Shapes">
      <Gallery />
      <div className="ml-px mt-[5px] flex flex-col gap-[2px]">
        <Spin className="h-[24px] border-[#ff00c8] text-[#ff00c8]" d="M2 1H4V3H6V5H0V3H2Z" />
        <Spin className="h-[21px] border-[#a9a9c9] text-[#55ff00]" d="M0 2H6V4H4V5H2V4H0Z" />
        <Spin className="h-[23px] border-b-2 border-[#a9a9c9] text-[#55ff00]" d="M0 0H6V1H0ZM0 2H6V4H4V6H2V4H0Z" />
      </div>
      <div className="ml-[7px] mt-[2px]">
        <Row
          off
          label="Outline"
          arrow={<BlackBox />}
          icon={
            <svg viewBox="0 0 60 54" className="h-[18px] w-[20px]" fill="none" stroke="#4a4a82" strokeWidth="3">
              <path d="M40 9H3V50H18M14 50L20 36L50 5L57 11L28 42Z" />
            </svg>
          }
        />
        <Row off label="Fill" arrow={<BlackBox />} icon={<BucketIcon dim />} />
      </div>
    </Group>
    <Group w="w-[60px]">
      <BigButton
        className="ml-[1px] w-[50px] pt-[1px]"
        arrow
        label={["Size"]}
        icon={
          <div className="flex h-[36px] w-[40px] flex-col">
            <div className="h-px bg-[#1f355f]" />
            <div className="mt-[3px] h-[2px] bg-[#1f355f]" />
            <div className="mt-[3px] h-[3px] bg-[#1f355f]" />
            <div className="mt-[3px] h-[5px] bg-[#1f355f]" />
            <div className="mt-[4px] h-[8px] bg-[#1f355f]" />
          </div>
        }
      />
    </Group>
    <Group w="w-[433px]" label="Colors">
      <BigButton
        className="ml-[2px] mt-[2px] h-[80px] w-[48px] bg-[#0e3a53] text-[#00ffff]"
        label={["Color", "1"]}
        icon={<div className="mb-[3px] h-[40px] w-[40px] border border-[#808080] bg-[#3c586c] p-[2px]"><div className="h-full w-full bg-black" /></div>}
      />
      <BigButton
        className="ml-[2px] mt-px w-[46px]"
        label={["Color", "2"]}
        icon={<div className="h-[30px] w-[30px] border border-[#9090b8] bg-[#4838a0] p-px"><div className="h-full w-full border border-[#c8c4e4] bg-white" /></div>}
      />
      <Swatches />
      <BigButton
        className="ml-[2px] mt-px w-[46px]"
        label={["Edit", "colors"]}
        icon={
          <div className="mb-px h-[37px] w-[37px] border border-[#808080] bg-white p-px">
            <div className="h-full w-full bg-[linear-gradient(to_right,#f00,#ff0,#0f0,#0ff,#00f,#f0f,#f00)]">
              <div className="h-full w-full bg-[linear-gradient(to_bottom,transparent_20%,#808080)]" />
            </div>
          </div>
        }
      />
    </Group>
    <Group w="w-[64px]">
      <BigButton
        className="mt-px w-[55px]"
        label={["Edit with", "Paint 3D"]}
        icon={
          <svg viewBox="0 0 111 111" className="mb-px h-[37px] w-[37px]">
            <rect x="1.500" y="1.500" width="108" height="108" fill="#f6f6f7" stroke="#a0a0a8" strokeWidth="3" />
            <path d="M46 102C48 84 24 70 24 44C24 24 38 12 56 12C76 12 88 26 88 44C88 72 62 84 46 102Z" fill="url(#gDrop)" />
            <path d="M34 26C44 10 74 8 84 30C74 22 64 34 50 26C44 22 38 22 34 26Z" fill="#22cdea" />
          </svg>
        }
      />
    </Group>
  </div>
);

/* ---------- window ---------- */

const TitleBar = () => (
  <div className="flex h-[37px] shrink-0 items-start text-white">
    <svg viewBox="0 0 180 180" className="ml-[16px] mt-[8px] h-[20px] w-[20px]">
      <Palette />
    </svg>
    <div className="ml-[6px] mt-[11px] flex h-[22px] border-x border-white bg-[#4400ee] px-[9px]">
      <div className="-my-[2px] flex h-[26px] items-center border-y-2 border-black bg-[#0c0680]">
        <svg viewBox="0 0 16 16" className="ml-[5px] h-[16px] w-[16px]">
          <rect width="16" height="16" fill="#8a6fc4" />
          <rect x="3" width="10" height="8" fill="#f4f4fb" />
          <rect x="4" y="10" width="8" height="6" fill="#d9d9e6" />
          <rect x="6" y="11" width="2" height="4" fill="#54468c" />
        </svg>
        <svg viewBox="0 0 16 12" className="ml-[10px] h-[12px] w-[16px]" fill="none" stroke="#fff" strokeWidth="1.600">
          <path d="M1 1V6.500H6.500M1.500 6L5 3C9 0 14 1 14.500 5C14.500 8 13 10 10 11" />
        </svg>
        <svg viewBox="0 0 16 12" className="ml-[10px] h-[12px] w-[16px]" fill="none" stroke="#fff" strokeWidth="1.600">
          <path d="M15 1V6.500H9.500M14.500 6L11 3C7 0 2 1 1.500 5C1.500 8 3 10 6 11" />
        </svg>
        <div className="w-[6px]" />
      </div>
      <div className="-my-[2px] -mr-px flex h-[26px] w-[16px] items-center justify-center border border-black bg-[#0c0680]">
        <div className="flex h-full w-full items-center justify-center border border-[#b0b0b0]">
          <svg viewBox="0 0 8 8" className="h-[8px] w-[8px]" fill="#55ff00" shapeRendering="crispEdges">
            <path d="M0 0H8V2H0ZM0 4H8V5H6V7H5V8H3V7H2V5H0Z" />
          </svg>
        </div>
      </div>
    </div>
    <span className="ml-[7px] mt-[9px] text-[14.5px] leading-[20px] tracking-[-0.1px]">Untitled - Paint</span>
    <div className="ml-auto mt-px h-[35px] w-[18px] bg-[#000f1a]" />
  </div>
);

const StatusBar = () => (
  <div className="flex h-[32px] shrink-0 border-y border-l border-[#55ff00] bg-[#0c0680] pt-px text-[14.5px] text-[#55ff00]">
    <div className="w-[199px] shrink-0 border-r border-[#55ff00] pl-[2px] pt-[5px]">
      <svg viewBox="0 0 17 17" className="h-[17px] w-[17px]" stroke="#1a2468" fill="#1a2468">
        <path d="M8.500 1V16M1 8.500H16M6.500 3L8.500 1L10.500 3ZM6.500 14L8.500 16L10.500 14ZM3 6.500L1 8.500L3 10.500ZM14 6.500L16 8.500L14 10.500Z" />
      </svg>
    </div>
    <div className="w-[200px] shrink-0 border-r border-[#55ff00] pl-[5px] pt-[6px]">
      <svg viewBox="0 0 17 17" className="h-[17px] w-[17px]" stroke="#1a2468" fill="none">
        <rect x="3.500" y=".5" width="13" height="12" strokeDasharray="1 1" />
        <path d="M1 1V13M4 15.500H16" />
      </svg>
    </div>
    <div className="flex w-[200px] shrink-0 border-r border-[#55ff00] pl-[5px]">
      <svg viewBox="0 0 17 17" className="mt-[6px] h-[17px] w-[17px]" stroke="#1a2468" fill="none">
        <rect x="3" y="0" width="14" height="13" fill="url(#gShape)" />
        <path d="M1 1V13M4 15.500H16" />
      </svg>
      <span className="ml-[6px] mt-[6px] whitespace-nowrap leading-[20px]">1152 × 648px</span>
    </div>
    <div className="w-[200px] shrink-0 border-r border-[#55ff00]" />
    <div className="w-[451px] shrink-0 border-r border-[#55ff00]" />
    <div className="flex pl-[23px]">
      <span className="mt-[6px] w-[35px] whitespace-nowrap leading-[20px] tracking-[-0.3px] text-[#ff8000]">100%</span>
      <svg viewBox="0 0 20 20" className="ml-[9px] mt-[4px] h-[20px] w-[20px]" fill="none" stroke="#05031f">
        <circle cx="10" cy="10" r="9.500" />
        <path d="M5 10H15" strokeWidth="2" stroke="#000" />
      </svg>
      <div className="ml-[14px] mt-[11px] h-[5px] w-[12px] border border-[#55ff00]" />
    </div>
  </div>
);

const PaintWindow = () => (
  <div className="absolute left-[552px] top-[109px] flex h-[864px] w-[1368px] flex-col overflow-hidden border-y border-l border-white bg-[#3a006f]">
    <TitleBar />
    <div className="ml-[8px] flex h-[817px] shrink-0 flex-col bg-[#0c0680]">
      <div className="flex h-[29px] shrink-0 border-b border-[#808080] text-[12.5px] text-[#55ff00]">
        <div className="flex h-[29px] w-[70px] items-center justify-center border border-b-0 border-[#808080] pr-px">File</div>
        <div className="flex h-[29px] w-[69px] items-center justify-center border border-b-0 border-[#00ffff] bg-[#0e3a53] text-[#00ffff]">Home</div>
        <div className="flex w-[63px] items-center justify-center">View</div>
      </div>
      <Ribbon />
      <div className="relative flex h-[643px] bg-[#000f1a] pl-[4px] pt-[4px]">
        <div className="w-[1154px] border-x border-t border-[#ffff00] bg-white" />
        <div className="absolute left-[1157px] top-[327px] h-[5px] w-[5px] border border-[#505050] bg-[#000f1a]" />
      </div>
      <StatusBar />
    </div>
  </div>
);

/* ---------- taskbar ---------- */

const Grip = ({ className }: { className: string }) => <div className={`mt-[11px] h-[26px] w-[4px] shrink-0 border-x border-[#55ff00] ${className}`} />;

const Underline = ({ className }: { className: string }) => <div className={`h-[5px] border border-[#0c0680] bg-[#ff8000] ${className}`} />;

const Tray = ({ children }: { children?: React.ReactNode }) => (
  <div className="flex h-[50px] w-[30px] shrink-0 items-center justify-center border border-[#ff8000]">{children}</div>
);

const Taskbar = () => (
  <div className="absolute bottom-0 left-0 flex h-[50px] w-full bg-[#000f1a] text-[#55ff00]">
    <div className="flex w-[1663px] border-t border-[#55ff00]">
      <div className="-mt-px flex h-[50px] w-[60px] items-center justify-center border border-[#55ff00]">
        <svg viewBox="0 0 60 60" className="h-[20px] w-[20px]" fill="#55ff00">
          <path d="M0 9L24 5V28H0ZM27 4L60 0V28H27ZM0 31H24V55L0 51ZM27 31H60V60L27 56Z" />
        </svg>
      </div>
      <Grip className="ml-[6px]" />
      <svg viewBox="0 0 84 69" className="ml-[29px] mt-[12px] h-[23px] w-[28px]">
        <rect x="1.500" y="1.500" width="81" height="66" fill="#050505" stroke="#9aa0a5" strokeWidth="3" />
        <rect x="2" y="1" width="80" height="8" fill="#c8ccd0" />
        <path d="M3 9H81V28C50 30 20 40 3 58Z" fill="#45484b" />
        <path d="M10 14V24M18 14V24M24 15L34 24M38 24H54" stroke="#e8e8e8" strokeWidth="3" />
      </svg>
      <div className="ml-[24px] flex w-[51px] flex-col items-center">
        <svg viewBox="0 0 84 72" className="mr-px mt-[12px] h-[24px] w-[28px]">
          <path d="M0 0H34L42 6H84V64H0Z" fill="#f9cf55" />
          <path d="M0 0H34L40 6L34 12H0Z" fill="#dc9a0e" />
          <path d="M15 69V44Q15 36 23 36H61Q69 36 69 44V69H57V54H28V69Z" fill="#3c9be4" />
        </svg>
        <div className="mt-[8px] flex">
          <Underline className="w-[40px]" />
          <Underline className="w-[11px]" />
        </div>
      </div>
      <div className="ml-[11px] flex w-[51px] flex-col items-center">
        <svg viewBox="8 0 164 176" className="mr-[2px] mt-[9px] h-[30px] w-[28px]">
          <Firefox />
        </svg>
        <Underline className="mt-[5px] w-[51px]" />
      </div>
      <div className="ml-[21px] mt-[9px] flex h-[30px] w-[30px] items-center justify-center bg-[#0e3a53]">
        <svg viewBox="0 0 60 48" className="h-[16px] w-[20px]">
          <rect width="60" height="48" fill="#404246" />
          <path d="M0 0H60V9H0Z" fill="#d5d7d9" />
          <path d="M40 0H60V9H40Z" fill="#8b8d90" />
          <path d="M8 17L20 27L8 38M28 39H46" fill="none" stroke="#fff" strokeWidth="5" />
        </svg>
      </div>
      <div className="ml-[17px] flex w-[61px] flex-col">
        <div className="flex h-[44px] items-center justify-center border border-[#0c0680] bg-[#0e3a53]">
          <svg viewBox="0 0 180 180" className="h-[30px] w-[31px]">
            <Palette />
          </svg>
        </div>
        <Underline className="w-full" />
      </div>
      <Grip className="ml-auto" />
      <span className="ml-[10px] mr-[4px] mt-[12px] w-[55px] whitespace-nowrap text-[14.5px] leading-[23px] tracking-[-0.2px]">Desktop</span>
    </div>
    <div className="flex w-[21px] justify-center bg-[#0c0680] pt-[7px]">
      <svg viewBox="0 0 9 8" className="h-[8px] w-[9px]" fill="none" stroke="#55ff00" strokeWidth="1.600">
        <path d="M.5.5L4 4L.5 7.500M5 .5L8.500 4L5 7.500" />
      </svg>
    </div>
    <Tray>
      <svg viewBox="0 0 16 9" className="h-[9px] w-[16px]" fill="none" stroke="#fff" strokeWidth="1.400">
        <path d="M.5 8.500L8 1L15.500 8.500" />
      </svg>
    </Tray>
    <Tray>
      <svg viewBox="0 0 60 60" className="h-[20px] w-[20px]">
        <circle cx="30" cy="30" r="30" fill="#8b1518" />
        <circle cx="22" cy="32" r="7" fill="none" stroke="#fff" strokeWidth="5" />
        <circle cx="33" cy="47" r="8" fill="none" stroke="#fff" strokeWidth="6" />
        <path d="M34 38C44 30 40 22 32 22M24 10L36 4L34 16L26 18M30 18L38 24" fill="none" stroke="#fff" strokeWidth="5" />
      </svg>
    </Tray>
    <Tray>
      <svg viewBox="0 0 15 20" className="h-[20px] w-[15px]" fill="none" stroke="#ff8000">
        <path d="M2.500 5.500V.5H10.500V5.500M9 19.500H3Q1.500 19.500 1.500 18V5.500H11.500V15M4.500 3V4M8.500 3V4" />
        <path d="M8.500 17L11 19.500L15 15" stroke="#9c5208" />
      </svg>
    </Tray>
    <Tray>
      <svg viewBox="0 0 16 16" className="mt-[2px] h-[16px] w-[16px]" fill="none" stroke="#ff8000">
        <path d="M.5 15C1 7 7 1 15 .5M4.500 15C5 9.500 9 5 15 4.500" stroke="#c06408" />
        <path d="M8 15C8.500 11.500 11 8.500 15 8" />
        <circle cx="13.500" cy="13.500" r="1" fill="#ff8000" />
      </svg>
    </Tray>
    <div className="flex w-[84px] shrink-0 flex-col items-center border border-[#55ff00] pt-px text-[14.5px] leading-[23px] tracking-[-0.1px]">
      <span className="whitespace-nowrap">1:38 AM</span>
      <span className="whitespace-nowrap">10/30/2020</span>
    </div>
    <div className="h-[50px] w-[32px] shrink-0 border border-[#ff8000]" />
  </div>
);

export default function App() {
  return (
    <div className="relative h-[1080px] w-[1920px] overflow-hidden bg-black font-['Open_Sans','Noto_Sans',sans-serif]">
      <Gradients />
      <div className="flex">
        {columns.map((col, i) => (
          <div key={i} className="flex flex-col">
            {col.map((item) => (
              <DesktopItem key={item.t[0]} item={item} />
            ))}
          </div>
        ))}
      </div>
      <PaintWindow />
      <svg viewBox="0 0 36 57" className="absolute left-[847px] top-[130px] h-[19px] w-[12px]">
        <path d="M2 2V44L12 35L19 54L27 51L19 33H33Z" fill="#fff" stroke="#000" strokeWidth="2" />
      </svg>
      <Taskbar />
    </div>
  );
}
